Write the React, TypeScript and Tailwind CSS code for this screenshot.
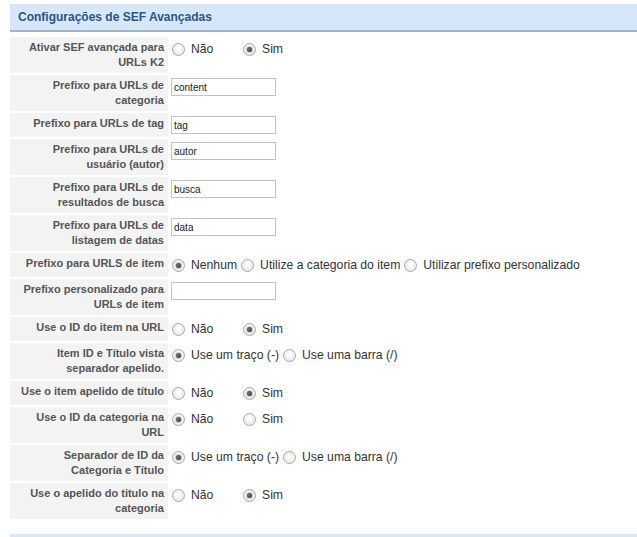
import React from 'react';

type Opt = { label: string; checked?: boolean; w?: string };

type Row =
    | { label: string; kind: 'input'; value: string }
    | { label: string; kind: 'radio'; options: Opt[] };

const yesNo = (sim: boolean): Opt[] => [
    { label: 'Não', checked: !sim, w: 'w-[48px]' },
    { label: 'Sim', checked: sim },
];

const rows: Row[] = [
    { label: 'Ativar SEF avançada para URLs K2', kind: 'radio', options: yesNo(true) },
    { label: 'Prefixo para URLs de categoria', kind: 'input', value: 'content' },
    { label: 'Prefixo para URLs de tag', kind: 'input', value: 'tag' },
    { label: 'Prefixo para URLs de usuário (autor)', kind: 'input', value: 'autor' },
    { label: 'Prefixo para URLs de resultados de busca', kind: 'input', value: 'busca' },
    { label: 'Prefixo para URLs de listagem de datas', kind: 'input', value: 'data' },
    {
        label: 'Prefixo para URLS de item',
        kind: 'radio',
        options: [
            { label: 'Nenhum', checked: true },
            { label: 'Utilize a categoria do item' },
            { label: 'Utilizar prefixo personalizado' },
        ],
    },
    { label: 'Prefixo personalizado para URLs de item', kind: 'input', value: '' },
    { label: 'Use o ID do item na URL', kind: 'radio', options: yesNo(true) },
    {
        label: 'Item ID e Título vista separador apelido.',
        kind: 'radio',
        options: [{ label: 'Use um traço (-)', checked: true }, { label: 'Use uma barra (/)' }],
    },
    { label: 'Use o item apelido de título', kind: 'radio', options: yesNo(true) },
    { label: 'Use o ID da categoria na URL', kind: 'radio', options: yesNo(false) },
    {
        label: 'Separador de ID da Categoria e Título',
        kind: 'radio',
        options: [{ label: 'Use um traço (-)', checked: true }, { label: 'Use uma barra (/)' }],
    },
    { label: 'Use o apelido do titulo na categoria', kind: 'radio', options: yesNo(true) },
];

function RadioDot({ checked }: { checked?: boolean }) {
    return (
        <span className="flex h-[13px] w-[13px] shrink-0 items-center justify-center rounded-full border border-[#a8a8a8] bg-[radial-gradient(circle_at_50%_40%,#ffffff,#e2e2e2)]">
            {checked && (
                <span className="flex h-[7px] w-[7px] items-center justify-center rounded-full bg-[#cfcfcf]">
                    <span className="h-[5px] w-[5px] rounded-full bg-[radial-gradient(circle_at_40%_40%,#777,#2a2a2a)]" />
                </span>
            )}
        </span>
    );
}

export default function App() {
    return (
        <div className="min-h-[537px] bg-white pl-[10px] pt-[4px] font-['Liberation_Sans',Arial,sans-serif]">
            <div className="flex h-[28px] items-center border-b-2 border-[#9fb4cd] bg-[#d5e7f9] pl-[8px]">
                <h2 className="text-[12px] font-bold text-[#2b5584]">Configurações de SEF Avançadas</h2>
            </div>

            <div className="mt-[5px] flex flex-col gap-[2px]">
                {rows.map((row) => (
                    <div key={row.label} className="flex">
                        <div className="w-[158px] shrink-0 bg-[#f3f3f3] px-[4px] py-[3px] text-right text-[11px] font-bold leading-[15px] text-[#555]">
                            {row.label}
                        </div>
                        <div className="py-[3px] pl-[3px]">
                            {row.kind === 'input' ? (
                                <div className="flex h-[18px] w-[105px] items-center border border-[#c3c3c3] bg-white pl-[2px] text-[10px] text-[#222]">
                                    {row.value}
                                </div>
                            ) : (
                                <div className="flex h-[18px] items-center pl-[1px] text-[12.2px] text-[#333]">
                                    {row.options.map((opt) => (
                                        <label key={opt.label} className="flex items-center">
                                            <RadioDot checked={opt.checked} />
                                            <span className={`ml-[6px] mr-[4px] ${opt.w ?? ''}`}>{opt.label}</span>
                                        </label>
                                    ))}
                                </div>
                            )}
                        </div>
                    </div>
                ))}
            </div>

            <div className="mt-[15px] h-[4px] bg-[#d5e7f9]" />
        </div>
    );
}
